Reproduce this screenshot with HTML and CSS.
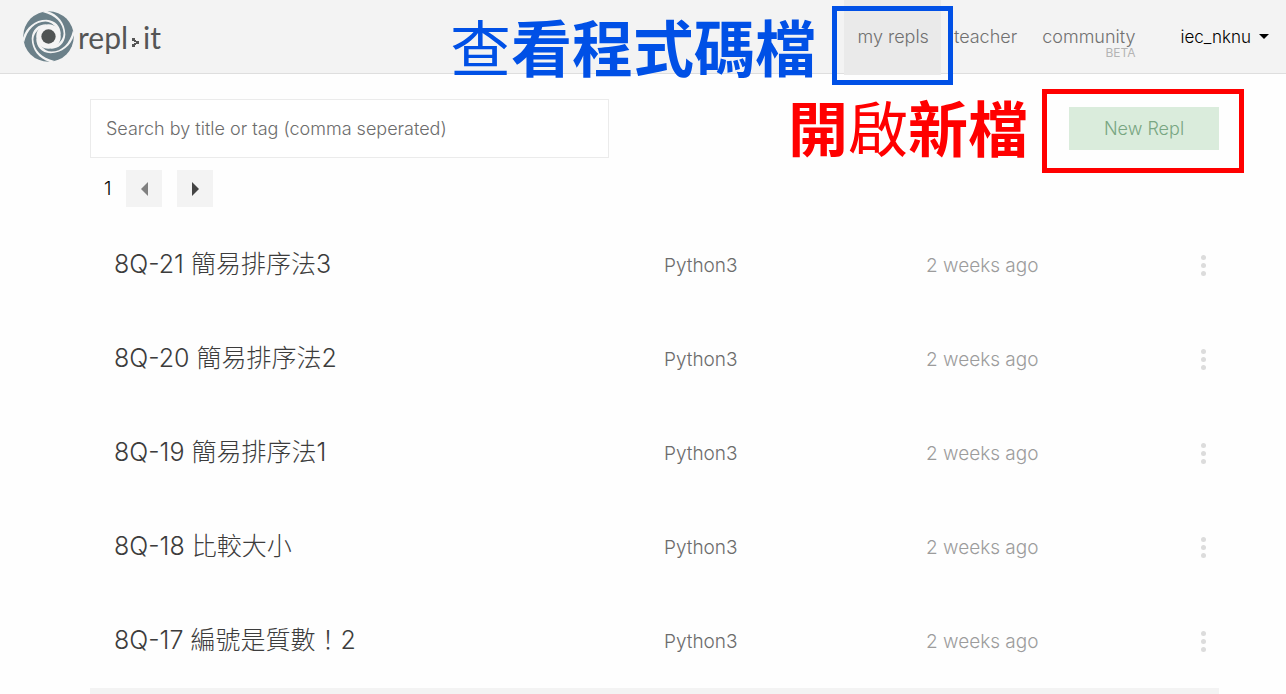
FILE: index.html
```html
<!DOCTYPE html>
<html lang="zh-Hant">
<head>
<meta charset="utf-8">
<meta name="viewport" content="width=device-width, initial-scale=1">
<title>repl.it – my repls</title>
<link rel="stylesheet" href="styles.css">
</head>
<body>
<header class="topbar">
  <a class="brand" href="#" aria-label="repl.it">
    <svg class="swirl" viewBox="-25 -25 50 50" aria-hidden="true">
      <circle r="24.8" fill="#6b8089"/>
      <g fill="#f4f4f4">
        <path id="arm" d="M-25.500 3C-23-8-14-16.500-2-16.500C7-16 12-10 12-2L8-8C5-12.500 1-14.800-3-14.800C-13-14.500-21-7-24 6Z"/>
        <use href="#arm" transform="rotate(90)"/>
        <use href="#arm" transform="rotate(180)"/>
        <use href="#arm" transform="rotate(270)"/>
        <circle r="12"/>
      </g>
      <circle r="7" fill="#505454"/>
    </svg>
    <span class="word">repl</span>
    <svg class="prompt" viewBox="0 0 7 9" aria-hidden="true"><path d="M0 0h3v3H0zM2 2h2v2H2zM4 3h3v3H4zM2 5h2v2H2zM0 6h3v3H0z"/></svg>
    <span class="word">it</span>
  </a>
  <nav class="nav">
    <a class="tab active" href="#">my repls</a>
    <a class="tab teacher" href="#">teacher</a>
    <a class="tab community" href="#">community<small class="beta">BETA</small></a>
    <button class="user" type="button">iec_nknu <span class="caret"></span></button>
  </nav>
</header>
<main class="content">
  <div class="tools">
    <input class="search" type="search" aria-label="Search repls" placeholder="Search by title or tag (comma seperated)">
    <button class="new" type="button">New Repl</button>
  </div>
  <div class="pager">
    <span class="page">1</span>
    <button class="step" type="button" aria-label="Previous page" disabled><span class="arrow prev"></span></button>
    <button class="step" type="button" aria-label="Next page"><span class="arrow next"></span></button>
  </div>
  <table class="repls">
    <tbody>
      <tr><td class="title">8Q-21 簡易排序法3</td><td class="lang">Python3</td><td class="date">2 weeks ago</td><td class="more"><button class="dots" type="button" aria-label="Options"><i></i><i></i><i></i></button></td></tr>
      <tr><td class="title">8Q-20 簡易排序法2</td><td class="lang">Python3</td><td class="date">2 weeks ago</td><td class="more"><button class="dots" type="button" aria-label="Options"><i></i><i></i><i></i></button></td></tr>
      <tr><td class="title">8Q-19 簡易排序法1</td><td class="lang">Python3</td><td class="date">2 weeks ago</td><td class="more"><button class="dots" type="button" aria-label="Options"><i></i><i></i><i></i></button></td></tr>
      <tr><td class="title">8Q-18 比較大小</td><td class="lang">Python3</td><td class="date">2 weeks ago</td><td class="more"><button class="dots" type="button" aria-label="Options"><i></i><i></i><i></i></button></td></tr>
      <tr><td class="title">8Q-17 編號是質數！2</td><td class="lang">Python3</td><td class="date">2 weeks ago</td><td class="more"><button class="dots" type="button" aria-label="Options"><i></i><i></i><i></i></button></td></tr>
    </tbody>
  </table>
  <div class="rule"></div>
</main>
<div class="note note-blue"><span class="thin">查</span>看程式碼檔</div>
<div class="frame frame-blue"></div>
<div class="note note-red">開<span class="thin">啟</span>新檔</div>
<div class="frame frame-red"></div>
</body>
</html>
```
FILE: styles.css
```css
* { box-sizing: border-box; }
html { overflow: hidden; }
body {
  margin: 0;
  position: relative;
  background: #fefefe;
  color: #444;
  font: 300 19px/24px Inter, "Noto Sans CJK TC", sans-serif;
}
a { color: inherit; text-decoration: none; }
button { border: 0; padding: 0; background: none; font: inherit; color: inherit; }

.topbar {
  display: flex;
  justify-content: space-between;
  height: 74px;
  padding: 0 17px 0 23px;
  background: #f3f3f3;
  border-bottom: 1px solid #dedede;
}
.brand { display: flex; align-items: center; color: #555; }
.swirl { width: 51px; height: 51px; margin-right: 4px; }
.word { font: 400 30px/40px Lato, sans-serif; }
.prompt { width: 7px; height: 9px; margin: 12px 4px 0 4px; fill: #555; }

.nav { display: flex; color: #707070; font-size: 18px; }
.tab { padding: 25px 12px 0 13px; }
.active { height: 75px; background: #eaeaea; }
.community { display: flex; flex-direction: column; align-items: flex-end; }
.beta { color: #b4b4b4; font-size: 12px; font-weight: 400; line-height: 8px; }
.user { display: flex; align-items: center; gap: 8px; margin-left: 33px; color: #000; font-size: 17px; }
.caret { border: 5px solid transparent; border-top-color: #000; border-bottom: 0; }

.content { padding: 25px 67px 0 90px; }
.tools { display: flex; justify-content: space-between; align-items: flex-start; }
.search {
  width: 46%;
  height: 59px;
  padding: 0 15px;
  border: 1px solid #ebebeb;
  background: #fff;
  font: inherit;
  font-size: 18px;
}
.search::placeholder { color: #6c6c6c; opacity: 1; }
.new { width: 150px; height: 43px; margin-top: 8px; background: #daecdc; color: #78a682; font-size: 18px; }

.pager { display: flex; align-items: center; gap: 15px; padding: 12px 0 11px 14px; }
.page { color: #000; }
.step { display: grid; place-items: center; width: 36px; height: 37px; background: #f3f3f3; }
.arrow { border: 7px solid transparent; }
.prev { border-right-color: #808080; border-left: 0; }
.next { border-left-color: #444; border-right: 0; }

.repls { width: 100%; border-collapse: collapse; table-layout: fixed; }
.repls td { height: 94px; padding: 1px 0 0; }
.repls .title { width: 574px; padding: 0 0 2px 24px; color: #3c3c3c; font-size: 25px; line-height: 36px; }
.lang { width: 262px; color: #6c6c6c; }
.date { color: #9c9c9c; }
.more { width: 18px; }
.dots { display: grid; gap: 3px; }
.dots i { width: 5px; height: 5px; border-radius: 3px; background: #dcdcdc; }
.rule { height: 6px; background: #f3f3f3; }

.note { position: absolute; white-space: nowrap; font: 700 60px/72px "Noto Sans CJK TC", sans-serif; }
.note .thin { font-weight: 400; }
.note-blue { left: 450px; top: 10px; color: #0050e6; font-size: 61px; }
.note-red { left: 788px; top: 90px; color: #f00; }
.frame { position: absolute; border: 5px solid; }
.frame-blue { left: 832px; top: 6px; width: 121px; height: 79px; border-color: #0050e6; }
.frame-red { left: 1042px; top: 89px; width: 202px; height: 84px; border-color: #f00; }
```
